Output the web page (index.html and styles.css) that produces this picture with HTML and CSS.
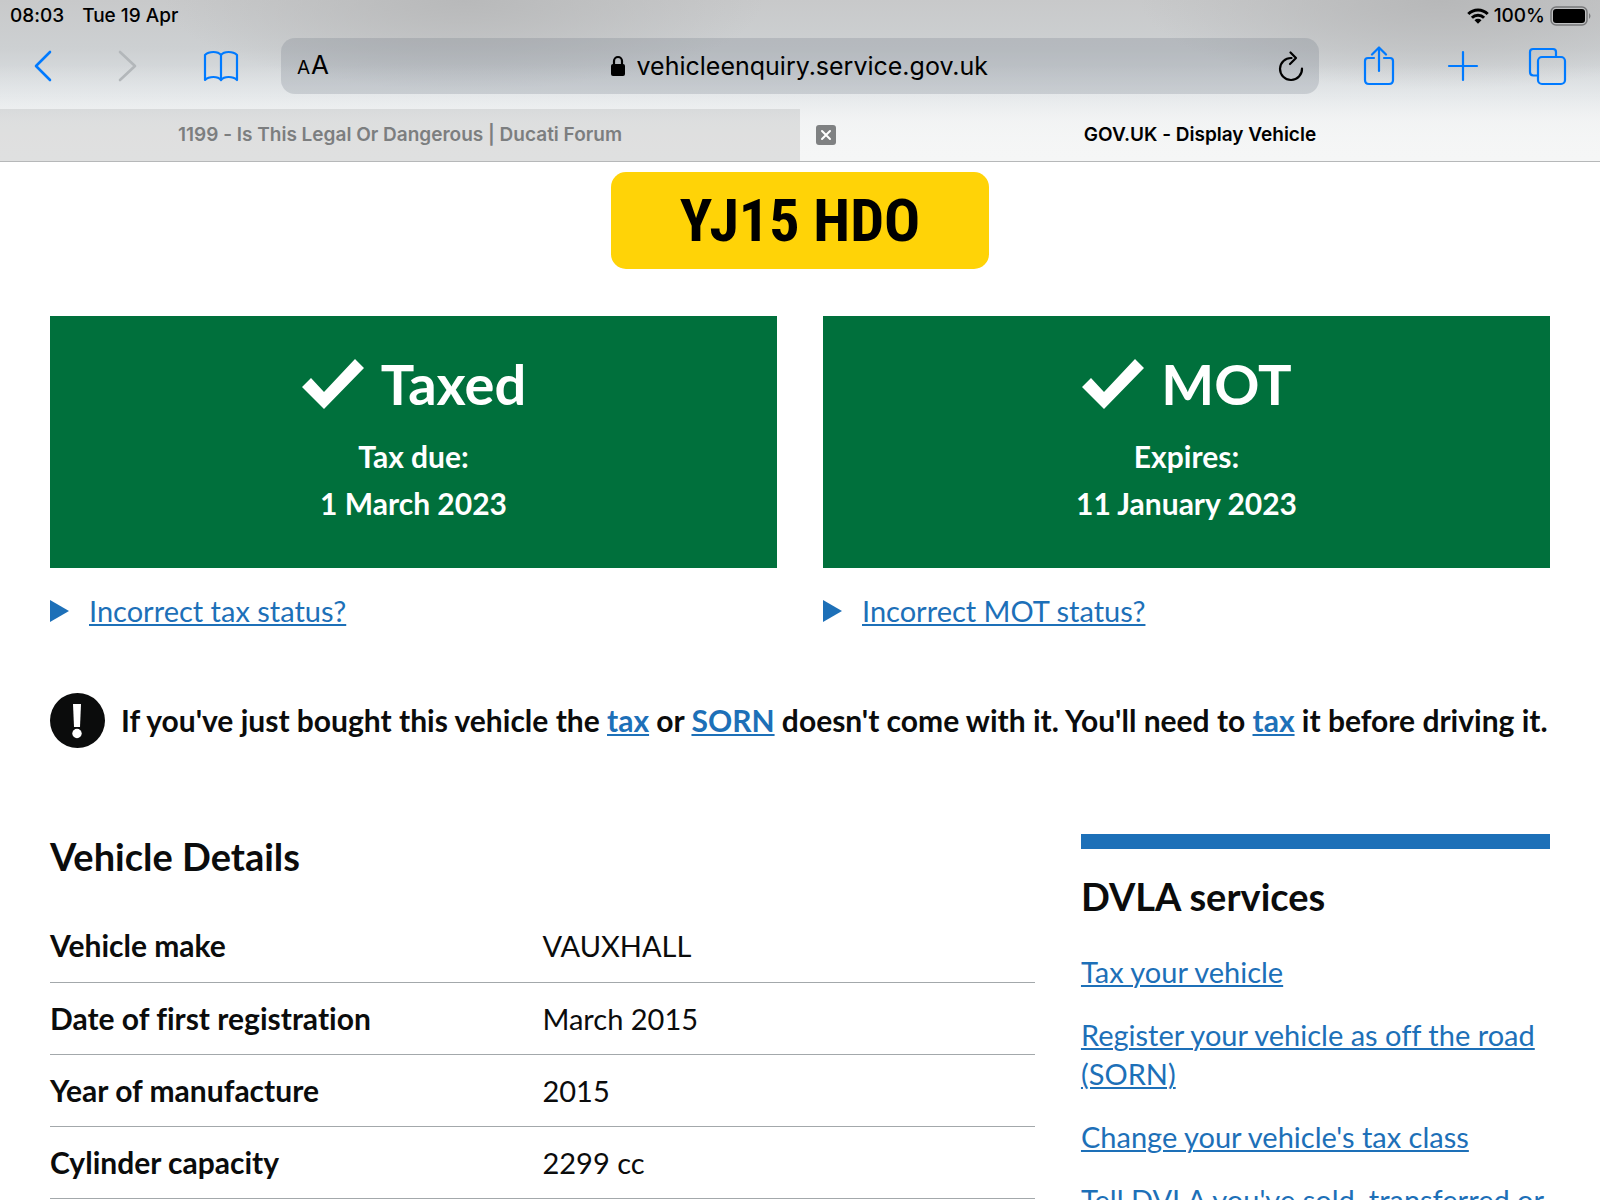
FILE: index.html
```html
<!DOCTYPE html>
<html lang="en">
<head>
<meta charset="utf-8">
<meta name="viewport" content="width=device-width, initial-scale=1">
<title>GOV.UK - Display Vehicle</title>
<link rel="stylesheet" href="styles.css">
</head>
<body>
<div class="screen">
  <header class="browser">
    <div class="status">
      <span>08:03</span>
      <span>Tue 19 Apr</span>
      <span class="status-right">
        <svg width="22" height="16" viewBox="0 0 22 16" aria-hidden="true"><g fill="none" stroke="#000" stroke-width="3"><path d="M1.300 6a13.500 13.500 0 0 1 19.400 0"/><path d="M4.900 9.700a8.600 8.600 0 0 1 12.200 0"/></g><path d="M7.500 12.200a5 5 0 0 1 7 0L11 15.800z"/></svg>
        <span>100%</span>
        <svg width="42" height="20" viewBox="0 0 42 20" aria-hidden="true"><rect x="1" y="1" width="36" height="18" rx="5" fill="none" stroke="#77787a" stroke-width="1.500"/><rect x="3" y="3" width="32" height="14" rx="3"/><path d="M39 7q3 3 0 6z" fill="#77787a"/></svg>
      </span>
    </div>
    <div class="toolbar">
      <button class="tool" aria-label="Back"><svg width="40" height="40" viewBox="0 0 40 40"><path d="M27 6 13 20l14 14" stroke-width="2.600"/></svg></button>
      <button class="tool disabled" aria-label="Forward"><svg width="40" height="40" viewBox="0 0 40 40"><path d="m13 6 15 14-15 14" stroke-width="2.600"/></svg></button>
      <button class="tool book" aria-label="Bookmarks"><svg width="40" height="40" viewBox="0 0 40 40"><path d="M20 9c-3-4-12-4-16 0v25c4-4 13-4 16 0 3-4 12-4 16 0V9c-4-4-13-4-16 0v25"/></svg></button>
      <div class="address">
        <button class="text-size" aria-label="Text size"><span class="small-a">A</span><span class="big-a">A</span></button>
        <label class="url"><svg width="16" height="22" viewBox="0 0 16 22" aria-label="Secure"><path d="M4 10V6a4 4 0 0 1 8 0v4" fill="none" stroke="#000" stroke-width="2.200"/><rect x="1" y="9" width="14" height="12" rx="2"/></svg><input type="text" value="vehicleenquiry.service.gov.uk" aria-label="Address"></label>
        <button class="reload" aria-label="Reload"><svg width="28" height="32" viewBox="0 0 28 32"><path d="M14.500 8A11 11 0 1 0 25 18.500M13.500 2.500 19 8l-6 6" fill="none" stroke="#000" stroke-width="2.200" stroke-linecap="round" stroke-linejoin="round"/></svg></button>
      </div>
      <button class="tool" aria-label="Share"><svg width="40" height="40" viewBox="0 0 40 40"><path d="M15 12H9q-3 0-3 3v19q0 4 4 4h20q4 0 4-4V15q0-3-3-3h-6M20 25V2M13 8.500 20 1.500l7 7"/></svg></button>
      <button class="tool" aria-label="New tab"><svg width="40" height="40" viewBox="0 0 40 40"><path d="M20 6v28M6 20h28"/></svg></button>
      <button class="tool" aria-label="Show tabs"><svg width="40" height="40" viewBox="0 0 40 40"><rect x="11" y="11" width="27" height="27" rx="4"/><path d="M29 11V6q0-3-3-3H6Q3 3 3 6v20q0 3.500 3.500 3.500H11"/></svg></button>
    </div>
    <nav class="tabs" aria-label="Open tabs">
      <div class="tab inactive"><a href="#forum">1199 - Is This Legal Or Dangerous | Ducati Forum</a></div>
      <div class="tab"><button class="close" aria-label="Close tab"><svg width="20" height="20" viewBox="0 0 20 20"><rect width="20" height="20" rx="3" fill="#7f8182"/><path d="m6 6 8 8M14 6l-8 8" stroke="#fff" stroke-width="2" stroke-linecap="round"/></svg></button><a href="#vehicle">GOV.UK - Display Vehicle</a></div>
    </nav>
  </header>

  <main class="page">
    <div class="plate">YJ15 HDO</div>

    <div class="statuses">
      <section>
        <div class="panel">
          <h2><svg width="64" height="52" viewBox="0 0 64 52" aria-hidden="true"><path d="m1 29 9-9 13 14L54 1l9 9-40 41z" fill="#fff"/></svg>Taxed</h2>
          <p>Tax due:</p>
          <p>1 March 2023</p>
        </div>
        <details><summary><svg width="19" height="22" viewBox="0 0 19 22" aria-hidden="true"><path d="M0 0v22l19-11z" fill="#1d70b8"/></svg><span>Incorrect tax status?</span></summary></details>
      </section>
      <section>
        <div class="panel">
          <h2><svg width="64" height="52" viewBox="0 0 64 52" aria-hidden="true"><path d="m1 29 9-9 13 14L54 1l9 9-40 41z" fill="#fff"/></svg>MOT</h2>
          <p>Expires:</p>
          <p>11 January 2023</p>
        </div>
        <details><summary><svg width="19" height="22" viewBox="0 0 19 22" aria-hidden="true"><path d="M0 0v22l19-11z" fill="#1d70b8"/></svg><span>Incorrect MOT status?</span></summary></details>
      </section>
    </div>

    <div class="warning">
      <svg width="55" height="55" viewBox="0 0 55 55" aria-hidden="true"><circle cx="27.500" cy="27.500" r="27.500" fill="#0b0c0c"/><path d="M23 11h8l-1 23h-6z" fill="#fff"/><circle cx="27" cy="40.500" r="4.700" fill="#fff"/></svg>
      <strong>If you've just bought this vehicle the <a href="#tax">tax</a> or <a href="#sorn">SORN</a> doesn't come with it. You'll need to <a href="#tax">tax</a> it before driving it.</strong>
    </div>

    <div class="columns">
      <section>
        <h2 class="details-title">Vehicle Details</h2>
        <table>
          <tr><th scope="row">Vehicle make</th><td>VAUXHALL</td></tr>
          <tr><th scope="row">Date of first registration</th><td>March 2015</td></tr>
          <tr><th scope="row">Year of manufacture</th><td>2015</td></tr>
          <tr><th scope="row">Cylinder capacity</th><td>2299 cc</td></tr>
        </table>
      </section>
      <aside>
        <h2>DVLA services</h2>
        <ul>
          <li><a href="#tax">Tax your vehicle</a></li>
          <li><a href="#sorn">Register your vehicle as off the road (SORN)</a></li>
          <li><a href="#class">Change your vehicle's tax class</a></li>
          <li><a href="#sold">Tell DVLA you've sold, transferred or</a></li>
        </ul>
      </aside>
    </div>
  </main>
</div>
</body>
</html>
```
FILE: styles.css
```css
* { box-sizing: border-box; }

body {
  margin: 0;
  background: #fff;
  color: #0b0c0c;
  font-family: Lato, "Open Sans", sans-serif;
  font-size: 29px;
  line-height: 39px;
  font-variant-ligatures: none;
}

h2, p, ul { margin: 0; padding: 0; }
svg { display: block; flex: none; }
button {
  padding: 0;
  border: 0;
  background: none;
  font: inherit;
  color: inherit;
}

.screen {
  height: 100vh;
  overflow: hidden;
}

/* Browser chrome */
.browser {
  color: #000;
  font-family: Inter, "Liberation Sans", sans-serif;
  border-bottom: 1px solid #b6b8b9;
  background:
    linear-gradient(to bottom, transparent 40%, #f5f6f6 100%),
    radial-gradient(ellipse 300px 90px at 29% 0, #b8b9ba, transparent),
    radial-gradient(ellipse 300px 90px at 90% 0, #b7b8b9, transparent),
    linear-gradient(to bottom, #c8c9ca 0, #cdd0d2 30%, #dee2e5 60%, #edeff0 75%, #f5f6f6 100%);
}

.status {
  display: flex;
  gap: 18px;
  padding: 4px 8px 0 10px;
  font-size: 19px;
  font-weight: 500;
  line-height: 24px;
}
.status-right {
  display: flex;
  align-items: center;
  gap: 5px;
  margin-left: auto;
}

.toolbar {
  display: flex;
  align-items: center;
  gap: 44px;
  padding: 10px 33px 15px 23px;
}
.tool {
  flex: none;
  fill: none;
  stroke: #007aff;
  stroke-width: 2.2;
  stroke-linecap: round;
  stroke-linejoin: round;
}
.disabled { stroke: #b3b7ba; }
.book { margin-left: 10px; }

.address {
  flex: 1;
  display: grid;
  grid-template-columns: 1fr auto 1fr;
  align-items: center;
  height: 56px;
  margin: 0 -4px;
  padding: 0 14px 0 16px;
  border-radius: 14px;
  background: rgba(90, 102, 114, .2);
}
.text-size {
  display: flex;
  align-items: baseline;
  gap: 1px;
  line-height: 30px;
}
.small-a { font-size: 19px; }
.big-a { font-size: 26px; }
.url {
  display: flex;
  align-items: center;
  gap: 11px;
}
.url input {
  width: 356px;
  padding: 0;
  border: 0;
  background: none;
  font: 400 25px/32px Inter, "Liberation Sans", sans-serif;
  color: #000;
}
.reload { justify-self: end; }

.tabs {
  display: grid;
  grid-template-columns: 1fr 1fr;
  font-size: 19px;
  font-weight: 600;
  line-height: 24px;
}
.tab {
  display: grid;
  grid-template-columns: 1fr auto 1fr;
  align-items: center;
  height: 52px;
  padding: 0 16px;
}
.tab a {
  grid-column: 2;
  color: #000;
  text-decoration: none;
}
.inactive { background: rgba(0, 0, 0, .085); }
.tab.inactive a { color: #7c7e7f; }

/* Page */
.page { padding: 10px 50px 0; }
.page a, summary span {
  color: #1d70b8;
  text-decoration: underline;
  text-decoration-thickness: 2px;
  text-underline-offset: 2px;
}

.plate {
  width: 378px;
  margin: 0 auto 47px;
  border-radius: 15px;
  background: #ffd307;
  color: #000;
  font: 700 60px/97px "Liberation Sans Narrow", "Roboto Condensed", Roboto, sans-serif;
  text-align: center;
}

.statuses {
  display: grid;
  grid-template-columns: 1fr 1fr;
  gap: 46px;
}
.panel {
  height: 252px;
  padding: 35px 20px 0;
  background: #00703c;
  color: #fff;
  text-align: center;
  font-size: 30px;
  font-weight: 700;
  line-height: 47px;
}
.panel h2 {
  display: flex;
  justify-content: center;
  align-items: center;
  gap: 16px;
  margin-bottom: 16px;
  font-size: 56px;
  line-height: 66px;
}
details { margin-top: 23px; }
summary {
  display: flex;
  align-items: center;
  gap: 20px;
  list-style: none;
}

.warning {
  display: flex;
  align-items: center;
  gap: 16px;
  margin: 63px 0 86px;
  font-size: 30px;
}

.columns {
  display: grid;
  grid-template-columns: 21fr 10fr;
  gap: 46px;
}
.columns h2 {
  font-size: 38px;
  line-height: 44px;
}
.details-title { margin-bottom: 32px; }
table {
  width: 100%;
  border-collapse: collapse;
  table-layout: fixed;
}
th, td {
  height: 72px;
  padding: 0;
  border-bottom: 1px solid #a3a8ab;
  text-align: left;
}
th { font-size: 30px; }
aside {
  border-top: 15px solid #1d70b8;
  padding-top: 25px;
}
aside h2 { margin-bottom: 34px; }
ul {
  display: grid;
  gap: 24px;
  list-style: none;
}
```
